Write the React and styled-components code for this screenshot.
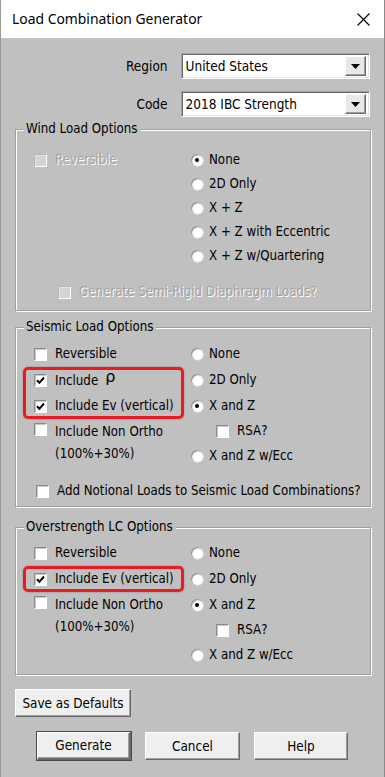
import React from "react";
import styled, { createGlobalStyle } from "styled-components";

const GlobalStyle = createGlobalStyle`
  html, body {
    margin: 0;
    padding: 0;
    background: #c0c0c0;
  }
`;

const Window = styled.div`
  width: 385px;
  height: 777px;
  box-sizing: border-box;
  background: #c0c0c0;
  border-left: 1px solid #9a9a9a;
  border-right: 1px solid #8a8a8a;
  font-family: "DejaVu Sans Condensed", "DejaVu Sans", sans-serif;
  font-size: 13.2px;
  color: #000;
  overflow: hidden;
`;

const TitleBar = styled.div`
  height: 38px;
  background: #fff;
  display: flex;
  align-items: center;
  justify-content: space-between;
  padding: 0 14px 0 11px;
`;

const TitleText = styled.span`
  font-family: "Noto Sans", "Open Sans", sans-serif;
  font-size: 13.9px;
  color: #000;
  margin-top: -1px;
`;

const CloseIcon = () => (
  <svg width="13" height="13" viewBox="0 0 13 13">
    <path d="M0.5 0.5 L12.5 12.5 M12.5 0.5 L0.5 12.5" stroke="#000" strokeWidth="1.1" />
  </svg>
);

const Body = styled.div`
  padding: 15px 14px 0 14px;
  display: flex;
  flex-direction: column;
`;

const FieldRow = styled.div`
  display: flex;
  align-items: center;
  height: 26px;
  gap: 13px;
  margin-top: ${(p) => p.$top || 0}px;
`;

const FieldLabel = styled.span`
  width: 153px;
  text-align: right;
  font-size: 13.5px;
`;

const SelectBox = styled.div`
  width: 190px;
  height: 26px;
  box-sizing: border-box;
  background: #fff;
  border-top: 1px solid #a0a0a0;
  border-left: 1px solid #a0a0a0;
  border-right: 1px solid #fff;
  border-bottom: 1px solid #fff;
  box-shadow: inset 1px 1px 0 #696969, inset -1px -1px 0 #e3e3e3;
  display: flex;
  align-items: center;
  justify-content: space-between;
  padding: 2px 3px 2px 3px;
`;

const SelectText = styled.span`
  font-size: 13.5px;
  padding-left: 1px;
`;

const DropButton = styled.div`
  width: 21px;
  height: 20px;
  box-sizing: border-box;
  background: #e8e8e8;
  border-top: 1px solid #fff;
  border-left: 1px solid #fff;
  border-right: 1px solid #696969;
  border-bottom: 1px solid #696969;
  box-shadow: inset -1px -1px 0 #a0a0a0;
  display: flex;
  align-items: center;
  justify-content: center;
`;

const DownArrow = () => (
  <svg width="9" height="5" viewBox="0 0 9 5">
    <path d="M0 0 H9 L4.5 5 Z" fill="#000" />
  </svg>
);

const GroupBox = styled.fieldset`
  margin: ${(p) => p.$top}px 0 0 0;
  width: 356px;
  min-width: 0;
  box-sizing: border-box;
  border: 1px solid #a0a0a0;
  box-shadow: inset 1px 1px 0 #fff, 1px 1px 0 #fff;
  padding: ${(p) => p.$padTop}px 0 ${(p) => p.$padBottom}px 8px;
`;

const Legend = styled.legend`
  padding: 0 3px 0 2px;
  line-height: 14px;
  background: #c0c0c0;
  font-size: 13.2px;
`;

const Columns = styled.div`
  display: grid;
  grid-template-columns: 157px 1fr;
  padding-left: 10px;
`;

const Column = styled.div`
  display: flex;
  flex-direction: column;
`;

const Row = styled.div`
  display: flex;
  align-items: ${(p) => (p.$multi ? "flex-start" : "center")};
  height: ${(p) => p.$h || 26}px;
  margin-left: ${(p) => p.$indent || 0}px;
  margin-top: ${(p) => p.$top || 0}px;
  gap: ${(p) => (p.$radio ? 6 : 8)}px;
  white-space: nowrap;
`;

const Text = styled.span`
  color: ${(p) => (p.$disabled ? "#a3a3a3" : "#000")};
  text-shadow: ${(p) => (p.$disabled ? "1px 1px 0 #fff" : "none")};
  line-height: ${(p) => p.$lh || 16}px;
`;

const Rho = styled.span`
  font-family: "DejaVu Sans", sans-serif;
  font-size: 16px;
  margin-left: 7px;
  position: relative;
  top: -3px;
`;

const BoxMark = styled.span`
  flex: none;
  width: 13px;
  height: 13px;
  box-sizing: border-box;
  background: ${(p) => (p.$disabled ? "#d4d4d4" : "#fff")};
  border-top: 1px solid ${(p) => (p.$disabled ? "#b4b4b4" : "#8a8a8a")};
  border-left: 1px solid ${(p) => (p.$disabled ? "#b4b4b4" : "#8a8a8a")};
  border-right: 1px solid #fff;
  border-bottom: 1px solid #fff;
  box-shadow: ${(p) =>
    p.$disabled ? "inset 1px 1px 0 #e4e4e4" : "inset 1px 1px 0 #c8c8c8"};
  display: flex;
  align-items: center;
  justify-content: center;
  margin-top: ${(p) => (p.$multi ? 2 : 0)}px;
`;

const CheckMark = () => (
  <svg width="9" height="9" viewBox="0 0 9 9">
    <path d="M1 4.2 L3.4 6.8 L8 1.5" stroke="#000" strokeWidth="2" fill="none" />
  </svg>
);

const RadioMark = styled.span`
  flex: none;
  width: 12px;
  height: 12px;
  border-radius: 50%;
  box-sizing: border-box;
  background: radial-gradient(circle at 60% 60%, #fff 0%, #fff 45%, #e6e6e6 80%);
  box-shadow: inset 1px 1px 1px #8a8a8a, 0.5px 0.5px 0 #fff;
  display: flex;
  align-items: center;
  justify-content: center;
`;

const RadioDot = styled.span`
  width: 4px;
  height: 4px;
  border-radius: 50%;
  background: #000;
`;

const Highlight = styled.div`
  display: flex;
  flex-direction: column;
  margin-left: -11px;
  width: 161px;
  padding-left: 11px;
  box-sizing: border-box;
  border-radius: 5px;
  box-shadow: inset 0 0 0 3px #ec1b23, 0 0 2px rgba(0, 0, 0, 0.35);
`;

const ButtonBase = styled.button`
  height: 28px;
  box-sizing: border-box;
  font-family: inherit;
  font-size: 13.4px;
  color: #000;
  background: #efefef;
  border-top: 1px solid #fff;
  border-left: 1px solid #fff;
  border-right: 1px solid #696969;
  border-bottom: 1px solid #696969;
  box-shadow: inset -1px -1px 0 #a0a0a0;
  padding: 0;
`;

const SaveButton = styled(ButtonBase)`
  width: 116px;
  margin-top: 14px;
`;

const ButtonBar = styled.div`
  display: flex;
  gap: 14px;
  margin: 15px 0 0 22px;
`;

const DialogButton = styled(ButtonBase)`
  width: ${(p) => p.$w || 94}px;
  ${(p) =>
    p.$default &&
    `
    outline: 1px solid #4a4a4a;
    border-right: 2px solid #696969;
    border-bottom: 2px solid #696969;
  `}
`;

const Check = ({ checked, disabled, multi, indent, top, h, children }) => (
  <Row $indent={indent} $top={top} $h={h} $multi={multi}>
    <BoxMark $disabled={disabled} $multi={multi}>
      {checked && <CheckMark />}
    </BoxMark>
    <Text $disabled={disabled} $lh={multi ? 22 : 16}>
      {children}
    </Text>
  </Row>
);

const Radio = ({ checked, h, children }) => (
  <Row $radio $h={h}>
    <RadioMark>{checked && <RadioDot />}</RadioMark>
    <Text>{children}</Text>
  </Row>
);

const NonOrtho = ({ top }) => (
  <Check multi top={top} h={44}>
    Include Non Ortho
    <br />
    (100%+30%)
  </Check>
);

export default function App() {
  return (
    <>
      <GlobalStyle />
      <Window>
        <TitleBar>
          <TitleText>Load Combination Generator</TitleText>
          <CloseIcon />
        </TitleBar>
        <Body>
          <FieldRow>
            <FieldLabel>Region</FieldLabel>
            <SelectBox>
              <SelectText>United States</SelectText>
              <DropButton>
                <DownArrow />
              </DropButton>
            </SelectBox>
          </FieldRow>
          <FieldRow $top={12}>
            <FieldLabel>Code</FieldLabel>
            <SelectBox>
              <SelectText>2018 IBC Strength</SelectText>
              <DropButton>
                <DownArrow />
              </DropButton>
            </SelectBox>
          </FieldRow>

          <GroupBox $top={5} $padTop={12} $padBottom={6}>
            <Legend>Wind Load Options</Legend>
            <Columns>
              <Column>
                <Check disabled h={24}>
                  Reversible
                </Check>
              </Column>
              <Column>
                <Radio checked h={24}>None</Radio>
                <Radio h={24}>2D Only</Radio>
                <Radio h={24}>X + Z</Radio>
                <Radio h={24}>X + Z with Eccentric</Radio>
                <Radio h={24}>X + Z w/Quartering</Radio>
              </Column>
            </Columns>
            <Columns>
              <Check disabled indent={24} top={12} h={24}>
                Generate Semi-Rigid Diaphragm Loads?
              </Check>
            </Columns>
          </GroupBox>

          <GroupBox $top={9} $padTop={7} $padBottom={3}>
            <Legend>Seismic Load Options</Legend>
            <Columns>
              <Column>
                <Check>Reversible</Check>
                <Highlight>
                  <Check checked>
                    Include<Rho>ρ</Rho>
                  </Check>
                  <Check checked>Include Ev (vertical)</Check>
                </Highlight>
                <NonOrtho top={2} />
              </Column>
              <Column>
                <Radio>None</Radio>
                <Radio>2D Only</Radio>
                <Radio checked>X and Z</Radio>
                <Check indent={25} h={24}>
                  RSA?
                </Check>
                <Radio>X and Z w/Ecc</Radio>
              </Column>
            </Columns>
            <Columns>
              <Check indent={2} top={10} h={24}>
                Add Notional Loads to Seismic Load Combinations?
              </Check>
            </Columns>
          </GroupBox>

          <GroupBox $top={13} $padTop={6} $padBottom={6}>
            <Legend>Overstrength LC Options</Legend>
            <Columns>
              <Column>
                <Check>Reversible</Check>
                <Highlight>
                  <Check checked>Include Ev (vertical)</Check>
                </Highlight>
                <NonOrtho top={2} />
              </Column>
              <Column>
                <Radio>None</Radio>
                <Radio>2D Only</Radio>
                <Radio checked>X and Z</Radio>
                <Check indent={25} h={24}>
                  RSA?
                </Check>
                <Radio>X and Z w/Ecc</Radio>
              </Column>
            </Columns>
          </GroupBox>

          <SaveButton>Save as Defaults</SaveButton>
          <ButtonBar>
            <DialogButton $default>Generate</DialogButton>
            <DialogButton $w={95}>Cancel</DialogButton>
            <DialogButton>Help</DialogButton>
          </ButtonBar>
        </Body>
      </Window>
    </>
  );
}
